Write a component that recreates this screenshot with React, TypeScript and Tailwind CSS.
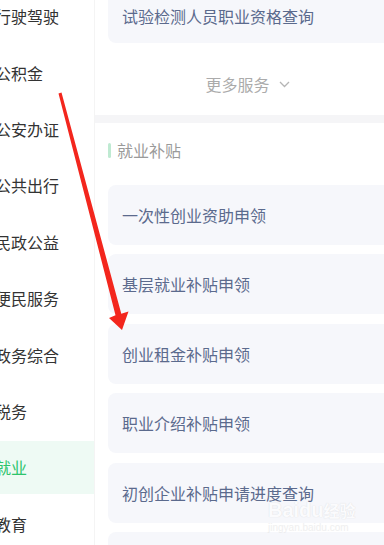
import React from 'react';

const menu = ['行驶驾驶', '公积金', '公安办证', '公共出行', '民政公益', '便民服务', '政务综合', '税务', '就业', '教育'];
const subsidies = ['一次性创业资助申领', '基层就业补贴申领', '创业租金补贴申领', '职业介绍补贴申领', '初创企业补贴申请进度查询', '灵活就业社保补贴申领'];

const App: React.FC = () => {
  return (
    <div className="relative w-[384px] h-[545px] overflow-hidden bg-white font-['Noto_Sans_CJK_SC',sans-serif]">
      <div className="flex h-full">
        {/* Side menu */}
        <aside className="w-[95px] shrink-0 border-r border-[#f4f4f4] -mt-[12px]">
          {menu.map((item) => {
            const active = item === '就业';
            return (
              <div key={item} className="h-[56.4px] flex items-stretch">
                <div
                  className={
                    active
                      ? 'flex-1 my-[2px] flex items-center -ml-[5px] bg-[#eefaf4] text-[16px] text-[#2dc46c]'
                      : 'flex-1 my-[2px] flex items-center -ml-[5px] text-[16px] text-[#333333]'
                  }
                >
                  <span>{item}</span>
                </div>
              </div>
            );
          })}
        </aside>

        {/* Services */}
        <main className="flex-1 min-w-0">
          <div className="pl-[13px] -mr-[20px]">
            <div className="-mt-[14px] h-[57px] rounded-[8px] bg-[#f6f7fb] flex items-center pl-[14px] pt-[2px] text-[16px] text-[#5b6a8d]">
              试验检测人员职业资格查询
            </div>
          </div>
          <div className="h-[72px] pt-[10px] pl-[16px] flex items-center justify-center text-[16px] text-[#ababab]">
            <span>更多服务</span>
            <svg className="ml-[9px] w-[11px] h-[7px]" viewBox="0 0 11 7" fill="none">
              <path d="M1 1l4.5 4.5L10 1" stroke="#b5b5b5" strokeWidth="1.3" />
            </svg>
          </div>
          <div className="h-[8px] bg-[#f5f5f7]" />

          <div className="h-[62px] pb-[8px] flex items-center pl-[13px]">
            <span className="w-[3px] h-[15px] bg-[#bfead2] rounded-sm mr-[6px]" />
            <span className="text-[16px] text-[#9a9a9a]">就业补贴</span>
          </div>

          <div className="pl-[13px] -mr-[20px] flex flex-col gap-[9.4px]">
            {subsidies.map((s) => (
              <div key={s} className="h-[60px] shrink-0 rounded-[8px] bg-[#f6f7fb] flex items-center pl-[14px] text-[16px] text-[#5b6a8d]">
                {s}
              </div>
            ))}
          </div>
        </main>
      </div>

      {/* Annotation arrow */}
      <svg className="absolute inset-0 pointer-events-none" width="384" height="545" viewBox="0 0 384 545">
        <polygon
          points="58.5,93.4 61.5,92.6 121.3,313.7 128.5,311.5 122,330 109,318 115.5,315.3"
          fill="#f3261d"
        />
      </svg>

      {/* Watermark */}
      <div className="absolute left-[268px] top-[500px] pointer-events-none text-white opacity-60 leading-none [text-shadow:0_0_1px_#c4c4c4]">
        <div className="text-[20px] font-bold font-['Liberation_Sans',sans-serif]">Baidu<span className="text-[16px] font-['Noto_Sans_CJK_SC',sans-serif]">经验</span></div>
        <div className="text-[10px] mt-[3px] text-[#e6e6e6] font-['Liberation_Sans',sans-serif] [text-shadow:none]">jingyan.baidu.com</div>
      </div>
    </div>
  );
};

export default App;
